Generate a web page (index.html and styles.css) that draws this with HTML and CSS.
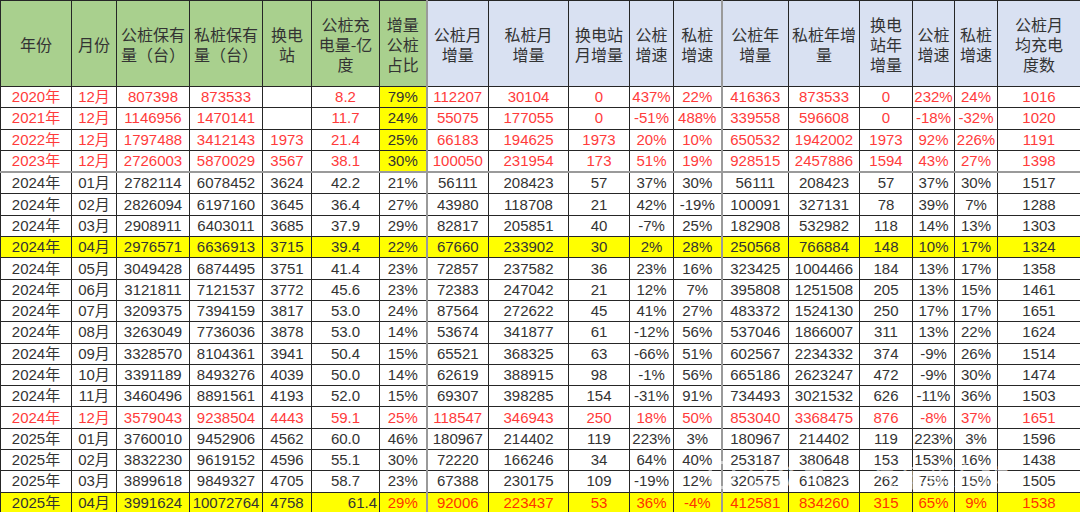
FILE: index.html
```html
<!DOCTYPE html>
<html lang="zh">
<head>
<meta charset="utf-8">
<title>充电桩数据</title>
<link rel="stylesheet" href="styles.css">
</head>
<body>
<div class="sheet">
<table class="grid">
<colgroup>
<col class="w71"><col class="w45"><col class="w73"><col class="w73"><col class="w49"><col class="w68"><col class="w47"><col class="w62"><col class="w80"><col class="w61"><col class="w44"><col class="w48"><col class="w67"><col class="w71"><col class="w53"><col class="w42"><col class="w43"><col class="w83">
</colgroup>
<thead>
<tr>
<th class="g">年份</th><th class="g">月份</th><th class="g">公桩保有<br>量（台）</th><th class="g">私桩保有<br>量（台）</th><th class="g">换电<br>站</th><th class="g">公桩充<br>电量-亿<br>度</th><th class="g">增量<br>公桩<br>占比</th>
<th class="b sep">公桩月<br>增量</th><th class="b">私桩月<br>增量</th><th class="b">换电站<br>月增量</th><th class="b">公桩<br>增速</th><th class="b">私桩<br>增速</th><th class="b sep">公桩年<br>增量</th><th class="b">私桩年增<br>量</th><th class="b">换电<br>站年<br>增量</th><th class="b">公桩<br>增速</th><th class="b">私桩<br>增速</th><th class="b">公桩月<br>均充电<br>度数</th>
</tr>
</thead>
<tbody>
<tr class="red"><td>2020年</td><td>12月</td><td>807398</td><td>873533</td><td></td><td>8.2</td><td class="hl">79%</td><td class="sep">112207</td><td>30104</td><td>0</td><td>437%</td><td>22%</td><td class="sep">416363</td><td>873533</td><td>0</td><td>232%</td><td>24%</td><td>1016</td></tr>
<tr class="red"><td>2021年</td><td>12月</td><td>1146956</td><td>1470141</td><td></td><td>11.7</td><td class="hl">24%</td><td class="sep">55075</td><td>177055</td><td>0</td><td>-51%</td><td>488%</td><td class="sep">339558</td><td>596608</td><td>0</td><td>-18%</td><td>-32%</td><td>1020</td></tr>
<tr class="red"><td>2022年</td><td>12月</td><td>1797488</td><td>3412143</td><td>1973</td><td>21.4</td><td class="hl">25%</td><td class="sep">66183</td><td>194625</td><td>1973</td><td>20%</td><td>10%</td><td class="sep">650532</td><td>1942002</td><td>1973</td><td>92%</td><td>226%</td><td>1191</td></tr>
<tr class="red gb"><td>2023年</td><td>12月</td><td>2726003</td><td>5870029</td><td>3567</td><td>38.1</td><td class="hl">30%</td><td class="sep">100050</td><td>231954</td><td>173</td><td>51%</td><td>19%</td><td class="sep">928515</td><td>2457886</td><td>1594</td><td>43%</td><td>27%</td><td>1398</td></tr>
<tr><td>2024年</td><td>01月</td><td>2782114</td><td>6078452</td><td>3624</td><td>42.2</td><td>21%</td><td class="sep">56111</td><td>208423</td><td>57</td><td>37%</td><td>30%</td><td class="sep">56111</td><td>208423</td><td>57</td><td>37%</td><td>30%</td><td>1517</td></tr>
<tr><td>2024年</td><td>02月</td><td>2826094</td><td>6197160</td><td>3645</td><td>36.4</td><td>27%</td><td class="sep">43980</td><td>118708</td><td>21</td><td>42%</td><td>-19%</td><td class="sep">100091</td><td>327131</td><td>78</td><td>39%</td><td>7%</td><td>1288</td></tr>
<tr><td>2024年</td><td>03月</td><td>2908911</td><td>6403011</td><td>3685</td><td>37.9</td><td>29%</td><td class="sep">82817</td><td>205851</td><td>40</td><td>-7%</td><td>25%</td><td class="sep">182908</td><td>532982</td><td>118</td><td>14%</td><td>13%</td><td>1303</td></tr>
<tr class="yel"><td>2024年</td><td>04月</td><td>2976571</td><td>6636913</td><td>3715</td><td>39.4</td><td>22%</td><td class="sep">67660</td><td>233902</td><td>30</td><td>2%</td><td>28%</td><td class="sep">250568</td><td>766884</td><td>148</td><td>10%</td><td>17%</td><td>1324</td></tr>
<tr><td>2024年</td><td>05月</td><td>3049428</td><td>6874495</td><td>3751</td><td>41.4</td><td>23%</td><td class="sep">72857</td><td>237582</td><td>36</td><td>23%</td><td>16%</td><td class="sep">323425</td><td>1004466</td><td>184</td><td>13%</td><td>17%</td><td>1358</td></tr>
<tr><td>2024年</td><td>06月</td><td>3121811</td><td>7121537</td><td>3772</td><td>45.6</td><td>23%</td><td class="sep">72383</td><td>247042</td><td>21</td><td>12%</td><td>7%</td><td class="sep">395808</td><td>1251508</td><td>205</td><td>13%</td><td>15%</td><td>1461</td></tr>
<tr><td>2024年</td><td>07月</td><td>3209375</td><td>7394159</td><td>3817</td><td>53.0</td><td>24%</td><td class="sep">87564</td><td>272622</td><td>45</td><td>41%</td><td>27%</td><td class="sep">483372</td><td>1524130</td><td>250</td><td>17%</td><td>17%</td><td>1651</td></tr>
<tr><td>2024年</td><td>08月</td><td>3263049</td><td>7736036</td><td>3878</td><td>53.0</td><td>14%</td><td class="sep">53674</td><td>341877</td><td>61</td><td>-12%</td><td>56%</td><td class="sep">537046</td><td>1866007</td><td>311</td><td>13%</td><td>22%</td><td>1624</td></tr>
<tr><td>2024年</td><td>09月</td><td>3328570</td><td>8104361</td><td>3941</td><td>50.4</td><td>15%</td><td class="sep">65521</td><td>368325</td><td>63</td><td>-66%</td><td>51%</td><td class="sep">602567</td><td>2234332</td><td>374</td><td>-9%</td><td>26%</td><td>1514</td></tr>
<tr><td>2024年</td><td>10月</td><td>3391189</td><td>8493276</td><td>4039</td><td>50.0</td><td>14%</td><td class="sep">62619</td><td>388915</td><td>98</td><td>-1%</td><td>56%</td><td class="sep">665186</td><td>2623247</td><td>472</td><td>-9%</td><td>30%</td><td>1474</td></tr>
<tr><td>2024年</td><td>11月</td><td>3460496</td><td>8891561</td><td>4193</td><td>52.0</td><td>15%</td><td class="sep">69307</td><td>398285</td><td>154</td><td>-31%</td><td>91%</td><td class="sep">734493</td><td>3021532</td><td>626</td><td>-11%</td><td>36%</td><td>1503</td></tr>
<tr class="red"><td>2024年</td><td>12月</td><td>3579043</td><td>9238504</td><td>4443</td><td>59.1</td><td>25%</td><td class="sep">118547</td><td>346943</td><td>250</td><td>18%</td><td>50%</td><td class="sep">853040</td><td>3368475</td><td>876</td><td>-8%</td><td>37%</td><td>1651</td></tr>
<tr><td>2025年</td><td>01月</td><td>3760010</td><td>9452906</td><td>4562</td><td>60.0</td><td>46%</td><td class="sep">180967</td><td>214402</td><td>119</td><td>223%</td><td>3%</td><td class="sep">180967</td><td>214402</td><td>119</td><td>223%</td><td>3%</td><td>1596</td></tr>
<tr><td>2025年</td><td>02月</td><td>3832230</td><td>9619152</td><td>4596</td><td>55.1</td><td>30%</td><td class="sep">72220</td><td>166246</td><td>34</td><td>64%</td><td>40%</td><td class="sep">253187</td><td>380648</td><td>153</td><td>153%</td><td>16%</td><td>1438</td></tr>
<tr><td>2025年</td><td>03月</td><td>3899618</td><td>9849327</td><td>4705</td><td>58.7</td><td>23%</td><td class="sep">67388</td><td>230175</td><td>109</td><td>-19%</td><td>12%</td><td class="sep">320575</td><td>610823</td><td>262</td><td>75%</td><td>15%</td><td>1505</td></tr>
<tr class="yel last"><td>2025年</td><td>04月</td><td>3991624</td><td>10072764</td><td>4758</td><td class="right">61.4</td><td class="or">29%</td><td class="or sep">92006</td><td class="or">223437</td><td class="or">53</td><td class="or">36%</td><td class="or">-4%</td><td class="or sep">412581</td><td class="or">834260</td><td class="or">315</td><td class="or">65%</td><td class="or">9%</td><td class="or">1538</td></tr>
</tbody>
</table>
<div class="watermark"><span class="wm-icon"></span>公众号 · 汽车崔东树</div>
</div>
</body>
</html>
```

FILE: styles.css
```css
html, body {
  margin: 0;
  padding: 0;
  background: #ffffff;
}

.sheet {
  position: relative;
  width: 1080px;
  height: 512px;
  overflow: hidden;
}

.grid {
  border-collapse: collapse;
  table-layout: fixed;
  width: 1080px;
  font-family: "Liberation Sans", "Noto Sans CJK SC", sans-serif;
  color: #333333;
}

.w71 { width: 71px; }
.w45 { width: 45px; }
.w73 { width: 73px; }
.w49 { width: 49px; }
.w68 { width: 68px; }
.w47 { width: 47px; }
.w62 { width: 62px; }
.w80 { width: 80px; }
.w61 { width: 61px; }
.w44 { width: 44px; }
.w48 { width: 48px; }
.w67 { width: 67px; }
.w53 { width: 53px; }
.w42 { width: 42px; }
.w43 { width: 43px; }
.w83 { width: 83px; }

.grid th,
.grid td {
  border: 1px solid #262626;
  padding: 0;
  text-align: center;
  overflow: hidden;
  white-space: nowrap;
}

.grid th {
  height: 85px;
  font-family: "Noto Sans CJK SC", "Liberation Sans", sans-serif;
  font-weight: normal;
  font-size: 16px;
  line-height: 20px;
  color: #333333;
  vertical-align: middle;
}

.grid th.g { background: #a9d08e; }
.grid th.b { background: #d9e1f2; }

.grid td {
  height: 20.3px;
  font-size: 15px;
  line-height: 20px;
}

.grid .sep { border-left: 2px solid #9a9a9a; }

.grid tr.gb td { border-bottom: 2px solid #9a9a9a; }

.grid tr.red td { color: #ff3b3b; }
.grid tr.red td.hl {
  background: #ffff00;
  color: #333333;
}

.grid tr.yel td { background: #ffff00; }

.grid td.right {
  text-align: right;
  padding-right: 2px;
}

.grid td.or { color: #ff3300; }

.watermark {
  position: absolute;
  left: 708px;
  top: 458px;
  display: flex;
  align-items: center;
  gap: 8px;
  font-family: "Noto Sans CJK SC", sans-serif;
  font-size: 28px;
  line-height: 34px;
  color: rgba(255, 255, 255, 0.55);
  white-space: nowrap;
  pointer-events: none;
}

.wm-icon {
  width: 28px;
  height: 28px;
  border-radius: 50%;
  border: 3px solid rgba(255, 255, 255, 0.55);
  box-sizing: border-box;
}
```
